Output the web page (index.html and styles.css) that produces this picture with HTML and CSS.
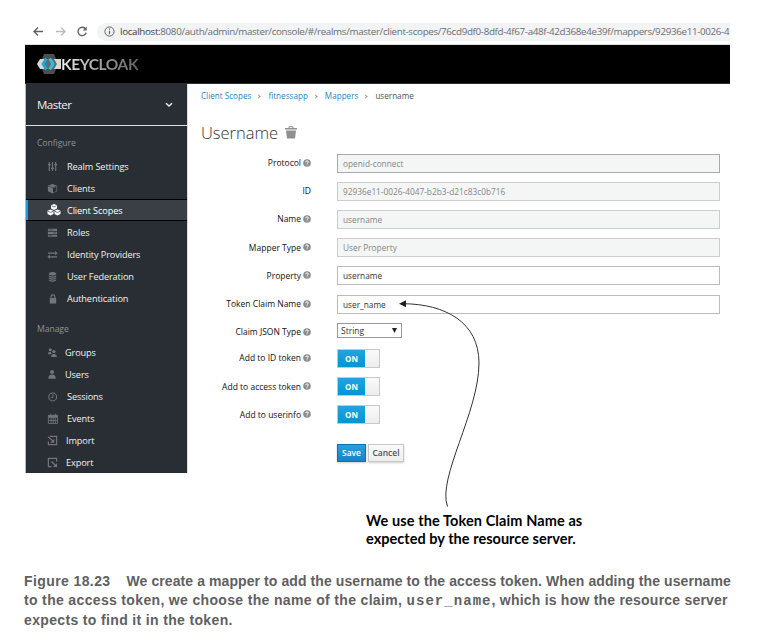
FILE: index.html
```html
<!DOCTYPE html>
<html lang="en">
<head>
<meta charset="utf-8">
<title>Keycloak mapper</title>
<link rel="stylesheet" href="styles.css">
</head>
<body>
<svg class="defs" width="0" height="0">
  <symbol id="help" viewBox="0 0 8 8"><circle cx="4" cy="4" r="3.8" fill="#8c8c8c"/><path d="M2.7 3.1Q2.8 1.9 4 1.9T5.3 3Q5.3 3.7 4.4 4.1Q4 4.3 4 4.8M4 5.4V6.3" fill="none" stroke="#fff" stroke-width="1"/></symbol>
</svg>
<div class="figure">
  <div class="browser">
    <svg class="browser-nav" width="64" height="16" viewBox="0 0 64 16" fill="none" stroke-width="1.4">
      <path d="M18 7.500H9M13 3.500L9 7.500l4 4" stroke="#5f6368"/>
      <path d="M31 7.500h9M36 3.500l4 4-4 4" stroke="#b9bbbd"/>
      <path d="M60.6 4.900A4.2 4.2 0 1 0 61.2 8.800" stroke="#5f6368"/><path d="M61.7 2.500v4h-4z" fill="#5f6368"/>
    </svg>
    <div class="address">
      <svg width="11" height="11" viewBox="0 0 11 11" fill="none" stroke="#5f6368"><circle cx="5.5" cy="5.5" r="4.6"/><path d="M5.5 4.8v3.5M5.5 2.6v1.2" stroke-width="1.2"/></svg>
      <span class="url"><b>localhost:</b>8080/auth/admin/master/console/#/realms/master/client-scopes/76cd9df0-8dfd-4f67-a48f-42d368e4e39f/mappers/92936e11-0026-4</span>
    </div>
  </div>
  <header class="masthead">
    <svg class="logo" width="26" height="22" viewBox="0 0 26 22">
      <path d="M7 1h10l4 10-4 10H7L3 11z" fill="#4d4d4d"/>
      <path d="M3 6h21v10H3L0 11z" fill="#d8d8d8"/><path d="M7 6h10l3 5-3 5H7z" fill="#6a6a6a"/>
      <path d="M9.300 5.500L6 11L9.300 16.500" fill="none" stroke="#14b0dc" stroke-width="2.800"/>
      <path d="M12.700 5.500L16 11L12.700 16.500" fill="none" stroke="#22c5ee" stroke-width="2.800"/>
    </svg>
    <span class="brand">KEYCLOAK</span>
  </header>
  <div class="console">
    <nav class="sidebar">
      <div class="realm"><span>Master</span><svg width="8" height="6" viewBox="0 0 8 6"><path d="M1 1.2l3 2.8 3-2.8" fill="none" stroke="#eee" stroke-width="1.4"/></svg></div>
      <h2>Configure</h2>
      <ul>
        <li><svg viewBox="0 0 12 12"><path d="M2.5 1v10M6 1v10M9.5 1v10M1 4h3M4.500 8h3M8 4h3" stroke="currentColor" stroke-width="1.3"/></svg><span>Realm Settings</span></li>
        <li><svg viewBox="0 0 12 12"><path d="M6 1l5 2v6l-5 2.500L1 9V3z" fill="currentColor"/><path d="M6.500 5.800l3.800-1.600v4.500L6.500 10.500z" fill="#292e34"/><path d="M1 3.200l5 2 5-2" stroke="#292e34" stroke-width=".6" fill="none"/></svg><span>Clients</span></li>
        <li class="active"><svg class="wide" viewBox="0 0 14 12"><path d="M7 0l3 1.300v3.200L7 6 4 4.500V1.300zM3.500 5.500l3 1.300v3.200l-3 1.500-3-1.500V6.800zM10.500 5.500l3 1.300v3.200l-3 1.500-3-1.500V6.800z" fill="#fff"/><path d="M4.500 1.800L7 3l2.500-1.200M1 7.300l2.500 1.200L6 7.300M8 7.300l2.500 1.200L13 7.300" fill="none" stroke="#393f44" stroke-width=".7"/></svg><span>Client Scopes</span></li>
        <li><svg viewBox="0 0 12 12"><path d="M1 2h10v2.300H1zM1 5.200h10v2.300H1zM1 8.400h10v2.300H1z" fill="currentColor"/><path d="M2 3.200h5M7 6.300h3M2 9.500h4" stroke="#292e34" stroke-width=".6"/></svg><span>Roles</span></li>
        <li><svg viewBox="0 0 12 12"><path d="M1 4.500h9M2 8.500h9" stroke="currentColor" stroke-width="1.300"/><path d="M9 2l2.500 2.500L9 7zM3 6L.5 8.500 3 11z" fill="currentColor"/></svg><span>Identity Providers</span></li>
        <li><svg viewBox="0 0 12 12"><path d="M2 2.500Q6-.5 10 2.500v1.300Q6 6 2 3.800zM2 4.800Q6 7 10 4.800v1.500Q6 8.500 2 6.300zM2 7.200Q6 9.400 10 7.200v1.300Q6 10.500 2 8.500zM2 9.300Q6 11.500 10 9.300v1Q6 13 2 10.300z" fill="currentColor"/></svg><span>User Federation</span></li>
        <li><svg viewBox="0 0 12 12"><path d="M3 5.500h7v6H3z" fill="currentColor"/><path d="M4.500 6V4Q4.500 2 6.500 2t2 2v2" fill="none" stroke="currentColor" stroke-width="1.300"/></svg><span>Authentication</span></li>
      </ul>
      <h2 class="manage">Manage</h2>
      <ul>
        <li class="out"><svg viewBox="0 0 12 12"><circle cx="3.500" cy="3" r="1.700" fill="currentColor"/><circle cx="7.500" cy="5" r="1.800" fill="currentColor"/><path d="M1 8Q1 5 4 5.200L5 7.500V8zM4.500 11Q4.500 7.500 7.500 7.500t3.300 3.500z" fill="currentColor"/></svg><span>Groups</span></li>
        <li class="out"><svg viewBox="0 0 12 12"><circle cx="5.500" cy="3.200" r="2.200" fill="currentColor"/><path d="M1.500 10.500Q1.500 6 5.500 6t4 4.500z" fill="currentColor"/></svg><span>Users</span></li>
        <li><svg viewBox="0 0 12 12"><circle cx="6.200" cy="6.500" r="4.300" fill="none" stroke="currentColor" stroke-width="1.100"/><path d="M6.500 3.500V7H4" fill="none" stroke="currentColor"/></svg><span>Sessions</span></li>
        <li><svg viewBox="0 0 12 12"><path d="M1.500 2.500h10V11.500h-10zM1.500 5h10M1.500 8.200h10M4.500 5v6.500M6.700 5v6.500M9 5v6.500M4 .8v3M9 .8v3" fill="none" stroke="currentColor" stroke-width=".9"/><path d="M1.500 2.500h10v2h-10z" fill="currentColor"/></svg><span>Events</span></li>
        <li class="out2"><svg viewBox="0 0 12 12"><path d="M3 1.500h7.500v9H1.500V7" fill="none" stroke="currentColor" stroke-width="1.300"/><path d="M1 2l5.500 4.500" stroke="currentColor" stroke-width="1.300"/><path d="M8 4v4.500H3.500z" fill="currentColor"/></svg><span>Import</span></li>
        <li class="out2"><svg viewBox="0 0 12 12"><path d="M10.500 5V1.500h-9v9H5" fill="none" stroke="currentColor" stroke-width="1.300"/><path d="M5 5l5 5" stroke="currentColor" stroke-width="1.500"/><path d="M11 6.500v4.500H6.500z" fill="currentColor"/></svg><span>Export</span></li>
      </ul>
    </nav>
    <main class="content">
      <div class="crumbs"><a>Client Scopes</a><i></i><a>fitnessapp</a><i></i><a>Mappers</a><i></i><span>username</span></div>
      <h1><span>Username</span><svg width="12" height="13" viewBox="0 0 12 13"><path d="M0 2h12v1.500H0zM1 4.500h10L10 12.500H2z" fill="#8f8f8f"/><path d="M4 2V.7h4V2" fill="none" stroke="#8f8f8f"/></svg></h1>
      <form class="form">
        <div class="row"><label>Protocol<svg><use href="#help"/></svg></label><div class="input off strong">openid-connect</div></div>
        <div class="row"><label class="plain">ID</label><div class="input off">92936e11-0026-4047-b2b3-d21c83c0b716</div></div>
        <div class="row"><label>Name<svg><use href="#help"/></svg></label><div class="input off">username</div></div>
        <div class="row"><label>Mapper Type<svg><use href="#help"/></svg></label><div class="input off">User Property</div></div>
        <div class="row"><label>Property<svg><use href="#help"/></svg></label><div class="input">username</div></div>
        <div class="row"><label>Token Claim Name<svg><use href="#help"/></svg></label><div class="input claim">user_name</div></div>
        <div class="row"><label>Claim JSON Type<svg><use href="#help"/></svg></label><div class="select"><span>String</span><svg width="5" height="5" viewBox="0 0 5 5"><path d="M0 0h5L2.500 5z" fill="#222"/></svg></div></div>
        <div class="row toggle"><label>Add to ID token<svg><use href="#help"/></svg></label><div class="switch"><b>ON</b></div></div>
        <div class="row toggle"><label>Add to access token<svg><use href="#help"/></svg></label><div class="switch"><b>ON</b></div></div>
        <div class="row toggle"><label>Add to userinfo<svg><use href="#help"/></svg></label><div class="switch"><b>ON</b></div></div>
        <div class="actions"><div class="btn primary">Save</div><div class="btn">Cancel</div></div>
      </form>
    </main>
  </div>
  <svg class="arrow" width="100" height="215" viewBox="390 295 100 215"><path d="M403 303.700C445 304 479 322 479 363C479 412 437 478 447.500 506.500" fill="none" stroke="#333" stroke-width="1"/><path d="M399 303.700l7-3.500v7z" fill="#231f20"/></svg>
  <div class="note"><div class="n1">We use the Token Claim Name as</div><div class="n2">expected by the resource server.</div></div>
  <div class="caption">
    <div class="c1"><span class="num">Figure 18.23</span>We create a mapper to add the username to the access token. When adding the username</div>
    <div class="c2">to the access token, we choose the name of the claim, <code>user_name</code><span class="tail">, which is how the resource server</span></div>
    <div class="c3">expects to find it in the token.</div>
  </div>
</div>
</body>
</html>
```

FILE: styles.css
```css
* { box-sizing: border-box; }
body { margin: 0; width: 778px; height: 637px; background: #fff; overflow: hidden; font-family: "Open Sans", sans-serif; color: #333; }
.defs { position: absolute; }
.figure { position: relative; padding: 15px 0 0 25px; width: 778px; height: 637px; white-space: nowrap; }
.browser { display: flex; align-items: center; width: 705px; height: 30px; border-bottom: 1px solid #dcdee0; padding: 4px 0 0; }
.browser-nav { display: block; flex: none; }
.address { display: flex; align-items: center; flex: 1; min-width: 0; height: 18px; margin-left: 8px; margin-top: 0; padding-left: 7px; background: #f1f3f4; border-radius: 9px 0 0 9px; overflow: hidden; }
.address svg { flex: none; margin-right: 5px; }
.url { font-size: 9.800px; letter-spacing: -.33px; line-height: 18px; color: #6b6e72; }
.url b { font-weight: 400; color: #3f4246; }
.masthead { display: flex; align-items: center; width: 705px; height: 39px; background: #000; border-bottom: 1px solid #292e34; padding-left: 12px; }
.logo { display: block; margin-top: -1px; }
.brand { font: 700 15.500px/20px Lato, sans-serif; letter-spacing: -.4px; margin-left: -2px; background: linear-gradient(90deg, #eee 0, #aaa 45%, #606060); -webkit-background-clip: text; background-clip: text; color: transparent; }
.console { display: flex; width: 705px; height: 389px; }
.sidebar { width: 162px; height: 389px; background: #292e34; border-left: 1px solid #b5b8ba; color: #e4e5e6; flex: none; }
.realm { display: flex; justify-content: space-between; align-items: center; height: 42px; padding: 0 14px 0 11px; border-bottom: 1px solid #e0e0e0; font-size: 11.500px; letter-spacing: -.5px; color: #f1f1f1; }
.sidebar h2 { margin: 9px 0 3px 11px; font-size: 8.600px; letter-spacing: -.05px; line-height: 17px; font-weight: 400; color: #8d9298; }
.sidebar h2.manage { margin: 12px 0 3px 11px; }
.sidebar ul { margin: 0; padding: 0; list-style: none; }
.sidebar li { display: flex; align-items: center; height: 22px; padding-left: 21px; font-size: 9.200px; letter-spacing: -.12px; color: #f0f1f2; }
.sidebar li svg { width: 11px; height: 11px; margin-right: 9px; color: #72767b; flex: none; }
.sidebar li svg.wide { width: 14px; height: 12px; margin-right: 6px; }
.sidebar li.out svg { margin-right: 7px; }
.sidebar li.out2 svg { margin-right: 8px; }
.sidebar li.active { background: #393f44; border-top: 1px solid #000; border-bottom: 1px solid #000; box-shadow: inset 2px 0 #1b9be0; color: #fff; }
.content { flex: 1; min-width: 0; padding-left: 13px; border-left: 1px solid #d8dadb; }
.crumbs { display: flex; align-items: center; height: 24px; padding-bottom: 1px; font-size: 8.150px; color: #4d5258; }
.crumbs a { color: #2a86c1; }
.crumbs i { width: 3px; height: 3px; border: solid #999; border-width: 1px 1px 0 0; transform: rotate(45deg); margin: 1px 8px 0 6px; }
h1 { display: flex; align-items: center; margin: 12px 0 0; height: 24px; font-size: 16.500px; font-weight: 300; color: #333; }
h1 svg { margin-left: 7px; }
.form { padding-top: 5px; }
.row { display: flex; align-items: center; height: 28.200px; }
.row label { display: flex; align-items: center; justify-content: flex-end; width: 110px; margin-right: 26px; padding-bottom: 1px; font-size: 8.500px; color: #111; }
.row label svg { width: 8px; height: 8px; margin-left: 2px; }
.input { width: 383px; height: 19px; border: 1px solid #bbb; padding-left: 5px; font-size: 8.300px; line-height: 18px; color: #333; background: #fff; }
.input.off { color: #858585; background: #f4f5f5; border-color: #ccc; }
.input.strong { border-color: #aaa; }
.select { display: flex; align-items: center; justify-content: space-between; width: 65px; height: 15px; border: 1px solid #999; padding: 0 4px 0 3px; font-size: 8.500px; margin-top: -3px; }
.toggle { position: relative; top: -2px; }
.switch { width: 43px; height: 19px; border: 1px solid #c8c8c8; background: linear-gradient(#fafafa, #ededed); }
.switch b { display: block; width: 27px; height: 17px; background: linear-gradient(#25a4dc, #0095d6); color: #fff; font-size: 8px; line-height: 17px; text-align: center; }
.actions { display: flex; gap: 2px; padding: 13px 0 0 136px; }
.btn { width: 36px; height: 18px; border: 1px solid #c8c8c8; background: linear-gradient(#fafafa, #ededed); box-shadow: 0 1px 2px #ccc; font-size: 8.500px; font-weight: 600; line-height: 16px; text-align: center; color: #4d5258; }
.btn.primary { width: 29px; color: #fff; background: linear-gradient(#29a0dc, #1485c7); border-color: #1270aa; }
.arrow { position: absolute; left: 390px; top: 295px; }
.note { margin: 39px 0 0 341px; font: 700 14.500px/18px Lato, sans-serif; color: #000; }
.n1 { letter-spacing: .1px; }
.n2 { letter-spacing: .03px; }
.caption { margin: 24px 0 0 -1px; font: 700 14px/19.300px "Liberation Sans", sans-serif; color: #5f6062; }
.c1 { letter-spacing: .085px; }
.c2 { letter-spacing: .34px; }
.c3 { letter-spacing: .35px; }
.num { margin-right: 16px; letter-spacing: .4px; }
.tail { letter-spacing: .22px; }
.caption code { font: 700 14px/14px "Liberation Mono", monospace; letter-spacing: 1.050px; }
```
